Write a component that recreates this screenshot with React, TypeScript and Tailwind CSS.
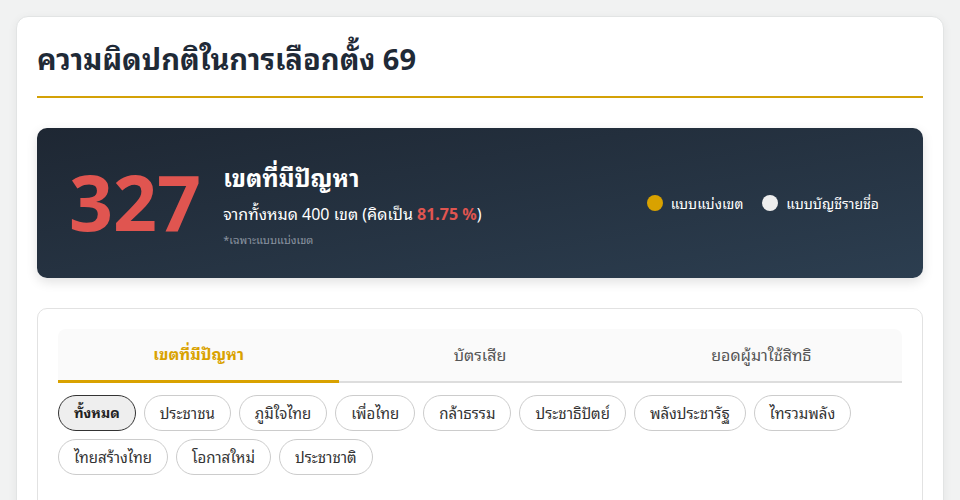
import React from "react";

const parties1 = ["ทั้งหมด", "ประชาชน", "ภูมิใจไทย", "เพื่อไทย", "กล้าธรรม", "ประชาธิปัตย์", "พลังประชารัฐ", "ไทรวมพลัง", "ไทยสร้างไทย", "โอกาสใหม่", "ประชาชาติ"];

export default function App() {
  return (
    <div className="min-h-[500px] bg-[#f1f2f2] px-4 pt-4" style={{ fontFamily: '"Noto Sans", "Noto Sans Thai Looped", sans-serif' }}>
      <div className="rounded-xl border border-[#e2e4e4] bg-white px-5 pt-5 pb-8 shadow-[0_2px_10px_rgba(0,0,0,0.06)]">
        <h1 className="text-[29px] font-bold leading-[44px] text-[#1f2a37]">ความผิดปกติในการเลือกตั้ง 69</h1>
        <div className="mt-[15px] h-[2px] bg-[#d4a106]" />

        <div className="mt-[30px] flex h-[150px] items-center rounded-[10px] bg-gradient-to-br from-[#1e2733] to-[#2c3e50] pl-8 pr-11 shadow-[0_4px_12px_rgba(0,0,0,0.12)]">
          <div className="text-[77px] font-bold leading-none text-[#e05550] -mt-1">327</div>
          <div className="ml-[22px] flex flex-col pt-[4px]">
            <div className="text-[24px] font-bold leading-[32px] text-white">เขตที่มีปัญหา</div>
            <div className="mt-[8px] text-[16px] leading-[24px] text-white">
              จากทั้งหมด 400 เขต (คิดเป็น <span className="font-bold text-[#e05550]">81.75 %</span>)
            </div>
            <div className="mt-[6px] text-[11px] leading-[16px] text-[#8a94a0]">*เฉพาะแบบแบ่งเขต</div>
          </div>
          <div className="ml-auto flex items-center gap-[14px]">
            <div className="flex items-center gap-2">
              <span className="h-4 w-4 rounded-full bg-[#d9a200]" />
              <span className="text-[14px] text-white">แบบแบ่งเขต</span>
            </div>
            <div className="flex items-center gap-2 ml-[5px]">
              <span className="h-4 w-4 rounded-full bg-[#eeeeee]" />
              <span className="text-[14px] text-white">แบบบัญชีรายชื่อ</span>
            </div>
          </div>
        </div>

        <div className="mt-[30px] rounded-[10px] border border-[#e2e2e2] bg-white px-5 pt-5 pb-10">
          <div className="flex rounded-t-lg border-b-2 border-[#dddddd] bg-[#fafafa]">
            <div className="flex-1 -mb-[2px] border-b-[3px] border-[#d9a200] text-center text-[16px] font-bold leading-[51px] text-[#d9a200]">เขตที่มีปัญหา</div>
            <div className="flex-1 text-center text-[16px] leading-[52px] text-[#555555]">บัตรเสีย</div>
            <div className="flex-1 text-center text-[16px] leading-[52px] text-[#555555]">ยอดผู้มาใช้สิทธิ</div>
          </div>
          <div className="mt-[12px] flex flex-wrap gap-2">
            {parties1.map((p, i) => (
              <div
                key={p}
                className={
                  i === 0
                    ? "h-9 rounded-full border border-[#333333] bg-[#eeeeee] px-[15px] text-[14px] font-bold leading-[34px] text-[#222222]"
                    : "h-9 rounded-full border border-[#cccccc] bg-white px-[15px] text-[15px] leading-[34px] text-[#333333]"
                }
              >
                {p}
              </div>
            ))}
          </div>
        </div>
      </div>
    </div>
  );
}
